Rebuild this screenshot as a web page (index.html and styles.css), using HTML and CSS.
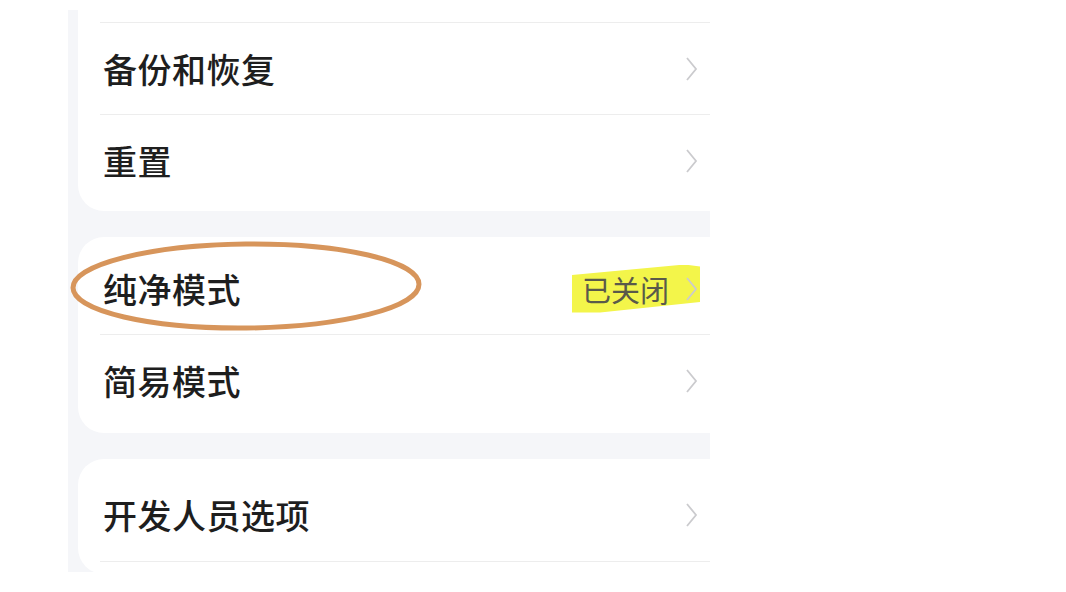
FILE: index.html
```html
<!DOCTYPE html>
<html lang="zh-CN">
<head>
    <meta charset="UTF-8">
    <meta name="viewport" content="width=device-width, initial-scale=1.0">
    <title>设置</title>
    <link rel="stylesheet" href="styles.css">
</head>
<body>
    <div class="screen">
        <div class="card card-top">
            <div class="row-tail"></div>
            <div class="row">
                <span class="label">备份和恢复</span>
                <svg class="chevron" width="13" height="26" viewBox="0 0 13 26"><polyline points="2,2 11,13 2,24"/></svg>
            </div>
            <div class="row">
                <span class="label">重置</span>
                <svg class="chevron" width="13" height="26" viewBox="0 0 13 26"><polyline points="2,2 11,13 2,24"/></svg>
            </div>
        </div>

        <div class="card">
            <div class="row">
                <span class="label">纯净模式</span>
                <span class="trail marked">
                    <span class="value">已关闭</span>
                    <svg class="chevron" width="13" height="26" viewBox="0 0 13 26"><polyline points="2,2 11,13 2,24"/></svg>
                </span>
                <svg class="circle-mark" width="360" height="96" viewBox="0 0 360 96">
                    <ellipse cx="178" cy="47" rx="173" ry="42" fill="none" stroke="#d7955b" stroke-width="5" transform="rotate(-0.6 178 47)"/>
                </svg>
            </div>
            <div class="row">
                <span class="label">简易模式</span>
                <svg class="chevron" width="13" height="26" viewBox="0 0 13 26"><polyline points="2,2 11,13 2,24"/></svg>
            </div>
        </div>

        <div class="card card-bottom">
            <div class="row">
                <span class="label">开发人员选项</span>
                <svg class="chevron" width="13" height="26" viewBox="0 0 13 26"><polyline points="2,2 11,13 2,24"/></svg>
            </div>
            <div class="row-tail"></div>
        </div>
    </div>
</body>
</html>
```

FILE: styles.css
```css
body {
    margin: 0;
    background: #fff;
    font-family: "Noto Sans CJK SC", "Noto Sans", sans-serif;
}
.screen {
    width: 632px;
    height: 562px;
    margin: 10px 0 0 68px;
    padding-left: 10px;
    background: #f5f6f9;
    overflow: hidden;
    display: flex;
    flex-direction: column;
    gap: 26px;
}
.card {
    background: #fff;
    border-radius: 26px 0 0 26px;
    padding: 6px 0;
    position: relative;
}
.card-top {
    border-top-left-radius: 0;
    padding-top: 0;
    padding-bottom: 4px;
}
.card-bottom {
    padding: 10px 0 0;
}
.row-tail {
    height: 12px;
    margin-left: 22px;
}
.card-top .row-tail {
    border-bottom: 1px solid #ededed;
}
.card-bottom .row-tail {
    border-top: 1px solid #ededed;
}
.row {
    height: 92px;
    display: flex;
    align-items: center;
    justify-content: space-between;
    padding: 0 10px 0 25px;
    position: relative;
}
.row + .row::before {
    content: "";
    position: absolute;
    top: -1px;
    left: 22px;
    right: 0;
    border-top: 1px solid #ededed;
}
.label {
    font-size: 34px;
    font-weight: 500;
    line-height: 1;
    color: #1e1e1e;
    letter-spacing: 0.5px;
}
.trail {
    display: flex;
    align-items: center;
    gap: 16px;
    position: relative;
}
.value {
    font-size: 29px;
    line-height: 1;
    color: #5a5a4a;
    position: relative;
    z-index: 1;
}
.marked::before {
    content: "";
    position: absolute;
    left: -10px;
    right: 0;
    top: -10px;
    bottom: -9px;
    background: #f3f54a;
    clip-path: polygon(0 22%, 88% 0, 100% 4%, 100% 78%, 22% 100%, 0 100%);
}
.chevron {
    fill: none;
    stroke: #cbcbce;
    stroke-width: 1.8;
    margin-right: 2px;
    position: relative;
    z-index: 1;
}
.circle-mark {
    position: absolute;
    left: -10px;
    top: -4px;
    pointer-events: none;
}
```
